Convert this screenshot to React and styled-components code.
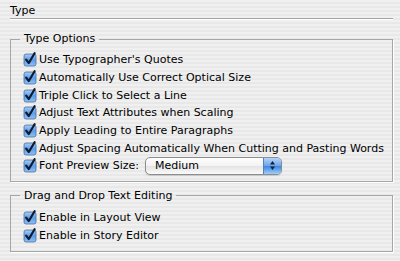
import styled, { createGlobalStyle } from 'styled-components';

const GlobalStyle = createGlobalStyle`
    html, body {
        margin: 0;
        padding: 0;
        overflow: hidden;
    }
    body {
        width: 400px;
        height: 261px;
        font-family: 'DejaVu Sans', 'Liberation Sans', sans-serif;
        font-size: 11px;
        color: #000;
        background: repeating-linear-gradient(
            to bottom,
            #f0f0f0 0px,
            #f0f0f0 2px,
            #e8e8e8 2px,
            #e8e8e8 4px
        );
    }
`;

const Panel = styled.div`
    display: flex;
    flex-direction: column;
    width: 383px;
    padding: 4px 0 0 10px;
`;

const Header = styled.div`
    line-height: 14px;
    border-bottom: 1px solid #a4a4a4;
    box-shadow: 0 1px 0 #fff;
    margin-bottom: 12px;
`;

const Group = styled.fieldset`
    margin: 0 0 6px 0;
    padding: ${p => p.$top || 4}px 6px 6px 12px;
    border: 1px solid #a6a6a6;
    border-radius: 0;
    box-shadow: 1px 1px 0 #fff;
    display: flex;
    flex-direction: column;
    width: 383px;
    box-sizing: border-box;
    min-width: 0;
`;

const Legend = styled.legend`
    margin-left: -3px;
    padding: 0 4px;
    line-height: 16px;
`;

const Row = styled.label`
    display: flex;
    align-items: center;
    gap: 1px;
    height: ${p => p.$h || 18}px;
    white-space: nowrap;
`;

const BoxIcon = styled.svg`
    flex: none;
    width: 15px;
    height: 15px;
`;

const Check = () => (
    <BoxIcon viewBox="0 0 15 15">
        <defs>
            <linearGradient id="cb" x1="0" y1="0" x2="0" y2="1">
                <stop offset="0" stopColor="#a9cdf5" />
                <stop offset="0.5" stopColor="#5c9de8" />
                <stop offset="1" stopColor="#8cc2f6" />
            </linearGradient>
        </defs>
        <rect x="1" y="2" width="12" height="12" rx="2" fill="url(#cb)" stroke="#4d6e99" strokeWidth="0.8" />
        <path d="M3.2 7.6 L5.8 11 L11.6 1.2" fill="none" stroke="#0d1a33" strokeWidth="2.2" strokeLinecap="round" strokeLinejoin="round" />
    </BoxIcon>
);

const Popup = styled.div`
    display: flex;
    align-items: stretch;
    margin-left: 5px;
    width: 137px;
    height: 18px;
    box-sizing: border-box;
    border: 1px solid #8d8d8d;
    border-radius: 5px;
    overflow: hidden;
    background: linear-gradient(#ffffff, #f2f2f2 50%, #e3e3e3 51%, #fafafa);
    box-shadow: 0 1px 1px rgba(0, 0, 0, 0.15);
`;

const PopupText = styled.span`
    flex: 1;
    padding-left: 9px;
    line-height: 16px;
`;

const PopupArrows = styled.div`
    width: 17px;
    display: flex;
    align-items: center;
    justify-content: center;
    border-left: 1px solid #5a7fb3;
    background: linear-gradient(#b5d3f7, #6aa4ea 50%, #3d84e0 51%, #9cd0fb);
`;

const Arrows = () => (
    <svg width="7" height="11" viewBox="0 0 7 11">
        <path d="M3.5 1 L6 4.5 L1 4.5 Z" fill="#10213f" />
        <path d="M3.5 10 L6 6.5 L1 6.5 Z" fill="#10213f" />
    </svg>
);

const typeOptions = [
    "Use Typographer's Quotes",
    'Automatically Use Correct Optical Size',
    'Triple Click to Select a Line',
    'Adjust Text Attributes when Scaling',
    'Apply Leading to Entire Paragraphs',
    'Adjust Spacing Automatically When Cutting and Pasting Words',
];

const dragOptions = ['Enable in Layout View', 'Enable in Story Editor'];

const App = () => {
    return (
        <Panel>
            <GlobalStyle />
            <Header>Type</Header>
            <Group>
                <Legend>Type Options</Legend>
                {typeOptions.map(t => (
                    <Row key={t} $h={17.7}>
                        <Check />
                        {t}
                    </Row>
                ))}
                <Row $h={17.7}>
                    <Check />
                    Font Preview Size:
                    <Popup>
                        <PopupText>Medium</PopupText>
                        <PopupArrows><Arrows /></PopupArrows>
                    </Popup>
                </Row>
            </Group>
            <Group $top={5}>
                <Legend>Drag and Drop Text Editing</Legend>
                {dragOptions.map(t => (
                    <Row key={t}>
                        <Check />
                        {t}
                    </Row>
                ))}
            </Group>
        </Panel>
    );
};

export default App;
